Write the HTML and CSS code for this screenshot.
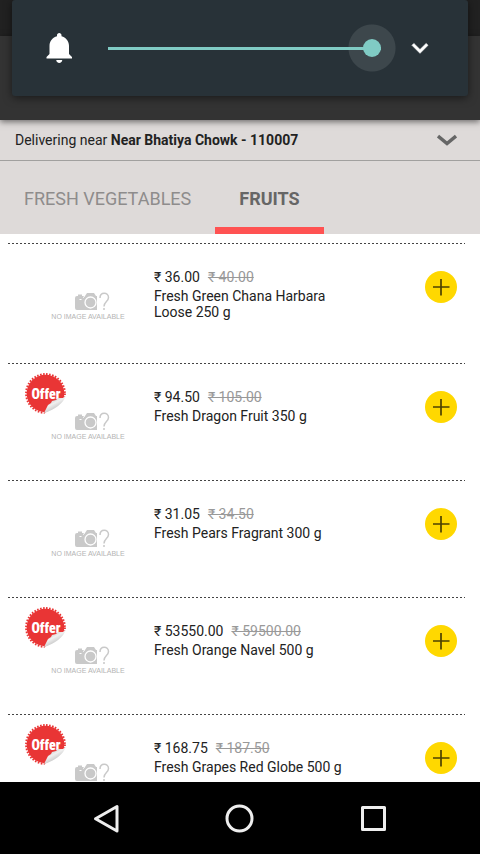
FILE: index.html
```html
<!DOCTYPE html>
<html lang="en">
<head>
<meta charset="utf-8">
<meta name="viewport" content="width=device-width, initial-scale=1">
<title>Fruits</title>
<link rel="stylesheet" href="styles.css">
</head>
<body>
<svg class="defs" aria-hidden="true">
  <defs>
    <linearGradient id="shade" x1="0.3" y1="0.2" x2="0.7" y2="0.8">
      <stop offset="0" stop-color="#c8c8c8"/>
      <stop offset="0.4" stop-color="#f0f0f0"/>
      <stop offset="1" stop-color="#b8b8b8"/>
    </linearGradient>
    <clipPath id="edge"><path d="M0 0H42V22L19 41H0z"/></clipPath>
  </defs>
  <symbol id="camera" viewBox="0 0 76 20">
    <path fill="#c9c9c9" d="M25 6q0-2 2-2h1V2.500h4V4h3l2-3h7l2 3h1v14H27q-2 0-2-2z"/>
    <path fill="none" stroke="#fff" d="M34.500 1v3.500l-1.500 1M31.500 7.500h-2"/>
    <circle cx="40.500" cy="10.500" r="5.500" fill="#c9c9c9" stroke="#fff" stroke-width="1.300"/>
    <path fill="none" stroke="#c9c9c9" stroke-width="1.500" d="M50 6c0-6.500 8.500-6 8.500-.5 0 4-4.500 4-4.500 9M54 16v2"/>
  </symbol>
  <symbol id="sticker" viewBox="0 0 42 42">
    <g clip-path="url(#edge)">
      <circle cx="20.500" cy="20.500" r="18.800" fill="#e93535"/>
      <circle cx="20.500" cy="20.500" r="19.400" fill="none" stroke="#e93535" stroke-width="2" stroke-dasharray="1.600 1.447"/>
    </g>
  </symbol>
  <symbol id="curl" viewBox="0 0 42 42">
    <path fill="url(#shade)" d="M19 40L23 32L26 30L27 28L31 27L33 25L38 25L41 22.500Q37 34 19 40z"/>
  </symbol>
  <symbol id="plus" viewBox="0 0 32 32">
    <path fill="none" stroke="#4d4100" stroke-width="1.700" d="M8 16H24.500M16 8V24.500"/>
  </symbol>
</svg>

<div class="screen">
  <div class="status-bar"></div>
  <header class="app-bar"></header>

  <section class="volume" aria-label="Notification volume">
    <svg class="bell" viewBox="0 0 24 24" aria-hidden="true"><path fill="#fff" d="M11.500 22c1.100 0 2-.9 2-2h-4c0 1.100.9 2 2 2zm6.500-6v-5.500c0-3.070-2.130-5.640-5-6.320V3.500c0-.83-.67-1.500-1.500-1.500S10 2.670 10 3.500v.68c-2.870.68-5 3.250-5 6.320V16l-2 2v1h17v-1l-2-2z"/></svg>
    <input class="slider" type="range" min="0" max="7" value="7" aria-label="Volume">
    <button class="expand" aria-label="Expand">
      <svg viewBox="0 0 24 24"><path fill="#fff" stroke="#fff" stroke-width="0.500" d="M16.590 8.590L12 13.170 7.410 8.590 6 10l6 6 6-6z"/></svg>
    </button>
  </section>

  <button class="location">
    <span>Delivering near <b>Near Bhatiya Chowk - 110007</b></span>
    <svg viewBox="0 0 20 12" aria-hidden="true"><path fill="none" stroke="#666" stroke-width="3.500" d="M1 2L10 9.500L19 2"/></svg>
  </button>

  <nav class="tabs">
    <a class="tab" href="#vegetables">FRESH VEGETABLES</a>
    <a class="tab active" href="#fruits">FRUITS</a>
  </nav>

  <main class="products">
    <article class="product">
      <div class="media">
        <div class="photo"><svg><use href="#camera"/></svg><span>NO IMAGE AVAILABLE</span></div>
      </div>
      <div class="info">
        <p class="prices"><span>₹ 36.00</span><s>₹ 40.00</s></p>
        <h2>Fresh Green Chana Harbara Loose 250 g</h2>
      </div>
      <button class="add" aria-label="Add"><svg><use href="#plus"/></svg></button>
    </article>
    <article class="product">
      <div class="media">
        <div class="badge"><svg><use href="#sticker"/></svg><span>Offer</span><svg><use href="#curl"/></svg></div>
        <div class="photo"><svg><use href="#camera"/></svg><span>NO IMAGE AVAILABLE</span></div>
      </div>
      <div class="info">
        <p class="prices"><span>₹ 94.50</span><s>₹ 105.00</s></p>
        <h2>Fresh Dragon Fruit 350 g</h2>
      </div>
      <button class="add" aria-label="Add"><svg><use href="#plus"/></svg></button>
    </article>
    <article class="product">
      <div class="media">
        <div class="photo"><svg><use href="#camera"/></svg><span>NO IMAGE AVAILABLE</span></div>
      </div>
      <div class="info">
        <p class="prices"><span>₹ 31.05</span><s>₹ 34.50</s></p>
        <h2>Fresh Pears Fragrant 300 g</h2>
      </div>
      <button class="add" aria-label="Add"><svg><use href="#plus"/></svg></button>
    </article>
    <article class="product">
      <div class="media">
        <div class="badge"><svg><use href="#sticker"/></svg><span>Offer</span><svg><use href="#curl"/></svg></div>
        <div class="photo"><svg><use href="#camera"/></svg><span>NO IMAGE AVAILABLE</span></div>
      </div>
      <div class="info">
        <p class="prices"><span>₹ 53550.00</span><s>₹ 59500.00</s></p>
        <h2>Fresh Orange Navel 500 g</h2>
      </div>
      <button class="add" aria-label="Add"><svg><use href="#plus"/></svg></button>
    </article>
    <article class="product">
      <div class="media">
        <div class="badge"><svg><use href="#sticker"/></svg><span>Offer</span><svg><use href="#curl"/></svg></div>
        <div class="photo"><svg><use href="#camera"/></svg></div>
      </div>
      <div class="info">
        <p class="prices"><span>₹ 168.75</span><s>₹ 187.50</s></p>
        <h2>Fresh Grapes Red Globe 500 g</h2>
      </div>
      <button class="add" aria-label="Add"><svg><use href="#plus"/></svg></button>
    </article>
  </main>

  <footer class="system-nav">
    <button aria-label="Back"><svg viewBox="0 0 32 32"><path d="M27 4.500V29L5.500 16.700z"/></svg></button>
    <button aria-label="Home"><svg viewBox="0 0 32 32"><circle cx="15.500" cy="16.500" r="12.500"/></svg></button>
    <button aria-label="Recent apps"><svg viewBox="0 0 32 32"><path d="M4.500 5.500H26.500V27.500H4.500z"/></svg></button>
  </footer>
</div>
</body>
</html>
```

FILE: styles.css
```css
* {
  box-sizing: border-box;
}

body {
  margin: 0;
  background: #fff;
  color: #222;
  font-family: Roboto, "Noto Sans", sans-serif;
  font-size: 14px;
  line-height: 16px;
}

button {
  border: 0;
  padding: 0;
  background: none;
  color: inherit;
  font: inherit;
}

svg {
  display: block;
}

.defs {
  position: absolute;
  width: 0;
  height: 0;
}

.screen {
  position: relative;
  display: flex;
  flex-direction: column;
  height: 100vh;
  overflow: hidden;
}

.status-bar {
  flex: none;
  height: 36px;
  background: #212121;
}

.app-bar {
  position: relative;
  flex: none;
  height: 84px;
  background: #333;
  box-shadow: 0 2px 6px rgba(0, 0, 0, 0.5);
}

/* Volume panel floats over the top of the app */
.volume {
  position: absolute;
  top: 0;
  left: 12px;
  right: 12px;
  display: flex;
  align-items: center;
  height: 96px;
  padding: 0 32px 0 30px;
  border-radius: 3px;
  background: #283238;
  box-shadow: 0 2px 8px rgba(0, 0, 0, 0.5);
}

.bell {
  flex: none;
  width: 36px;
  height: 36px;
}

.slider {
  flex: 1;
  min-width: 0;
  height: 48px;
  margin: 0 8px 0 30px;
  padding-right: 15px;
  appearance: none;
  background: radial-gradient(circle at calc(100% - 24px) 50%, #3d474c 23px, transparent 24px);
}

.slider::-webkit-slider-runnable-track {
  height: 3px;
  background: #80cbc4;
}

.slider::-webkit-slider-thumb {
  appearance: none;
  width: 18px;
  height: 18px;
  margin-top: -8px;
  border-radius: 50%;
  background: #80cbc4;
}

.expand svg {
  width: 32px;
  height: 32px;
}

.location {
  display: flex;
  flex: none;
  align-items: center;
  justify-content: space-between;
  height: 41px;
  padding: 0 23px 0 15px;
  border-bottom: 1px solid #a1a09f;
  background: #dedad9;
  text-align: left;
}

.location svg {
  width: 20px;
  height: 12px;
}

.tabs {
  display: flex;
  flex: none;
  height: 73px;
  background: #dedad9;
  font-size: 18px;
}

.tab {
  display: flex;
  align-items: center;
  padding: 9px 24px 0;
  border-bottom: 7px solid transparent;
  color: #8e8c8c;
  text-decoration: none;
}

.tab.active {
  border-color: #ff5252;
  color: #666;
  font-weight: 700;
}

.products {
  flex: 1;
  min-height: 0;
  padding: 9px 15px 0 8px;
  overflow: hidden;
}

.product {
  display: grid;
  grid-template-columns: 146px 1fr 32px;
  align-items: start;
  min-height: 117px;
  padding-right: 8px;
  background: repeating-linear-gradient(90deg, #444 0 2px, transparent 2px 4px) top / 100% 1px no-repeat;
}

.media {
  position: relative;
  padding: 49px 0 0 42px;
}

.photo {
  width: 76px;
  color: #b4b4b4;
  font-family: "Liberation Sans", sans-serif;
  font-size: 7px;
  line-height: 10px;
  text-align: center;
  white-space: nowrap;
}

.photo svg {
  width: 76px;
  height: 20px;
}

.photo span {
  display: block;
}

/* Sticker, its label and the folded corner share one cell */
.badge {
  position: absolute;
  top: 10px;
  left: 17px;
  display: grid;
  place-items: center;
  width: 42px;
  height: 42px;
  color: #fff;
  font-family: "Liberation Sans Narrow", "Roboto Condensed", Roboto, sans-serif;
  font-size: 14px;
  font-weight: 900;
}

.badge > * {
  grid-area: 1 / 1;
}

.badge svg {
  width: 42px;
  height: 42px;
}

.info {
  max-width: 200px;
  padding: 26px 0 43px;
}

.prices {
  display: flex;
  gap: 8px;
  margin: 0 0 3px;
}

.prices s {
  color: #999;
}

.info h2 {
  margin: 0;
  font-size: 14px;
  font-weight: 400;
}

.add {
  width: 32px;
  height: 32px;
  margin-top: 28px;
  border-radius: 50%;
  background: #ffd800;
}

.add svg {
  width: 32px;
  height: 32px;
}

.system-nav {
  display: flex;
  flex: none;
  justify-content: center;
  height: 72px;
  background: #000;
}

.system-nav button {
  display: grid;
  flex: 0 0 28%;
  place-items: center;
}

.system-nav svg {
  width: 32px;
  height: 32px;
  fill: none;
  stroke: #eee;
  stroke-width: 3;
  stroke-linejoin: round;
}
```
